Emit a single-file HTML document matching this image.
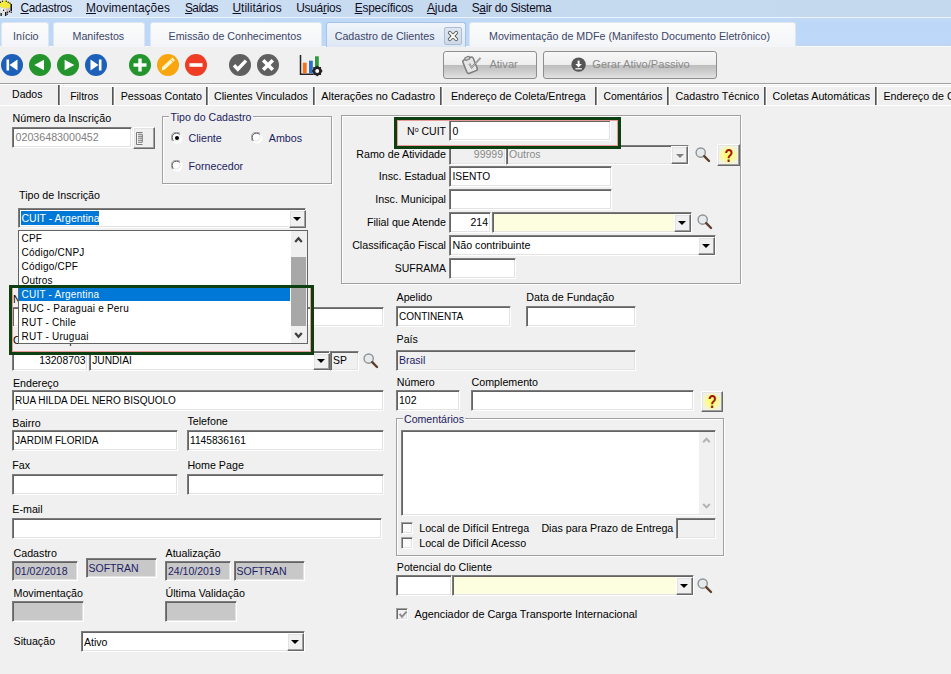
<!DOCTYPE html><html><head><meta charset="utf-8"><style>
*{margin:0;padding:0;box-sizing:border-box}
html,body{width:951px;height:674px;overflow:hidden;background:#f0f0f0;font-family:"Liberation Sans",sans-serif}
.abs{position:absolute}
.t{position:absolute;white-space:nowrap;line-height:1;font-family:"Liberation Sans",sans-serif}
.ed{position:absolute;border-style:solid;border-width:1px;border-color:#7c7c7c #fff #fff #7c7c7c;box-shadow:inset 1px 1px 0 #646464, inset -1px -1px 0 #e3e3e3}
.btn{position:absolute;border-style:solid;border-width:1px;border-color:#fff #696969 #696969 #fff;box-shadow:inset -1px -1px 0 #a0a0a0, inset 1px 1px 0 #e3e3e3;background:#f0f0f0}
.tri{position:absolute;width:0;height:0;border-left:4px solid transparent;border-right:4px solid transparent;border-top:4px solid #000}
.grp{position:absolute;border:1px solid #a0a0a0;box-shadow:1px 1px 0 #fff, inset 1px 1px 0 #fff}
.chk{position:absolute;width:12px;height:12px;border-style:solid;border-width:1px;border-color:#a0a0a0 #fff #fff #a0a0a0;box-shadow:inset 1px 1px 0 #696969, inset -1px -1px 0 #e3e3e3}
.u{text-decoration:underline}
</style></head><body>

<div class="abs" style="left:0;top:0;width:951px;height:17px;background:linear-gradient(to right,#d8e6f6 0,#cddff3 200px,#c5d9ef 420px,#c4d8ee 100%)"></div>
<div class="abs" style="left:0;top:17px;width:951px;height:1px;background:#eaf3fc"></div>
<div class="abs" style="left:0;top:18px;width:951px;height:28px;background:linear-gradient(#c2daf5 0,#bcd8f8 20%,#bdd8f8 85%,#c3d3f3 100%)"></div>
<div class="abs" style="left:0;top:46px;width:951px;height:1px;background:#f8fbfd"></div>
<svg class="abs" style="left:0;top:0" width="13" height="16" viewBox="0 0 13 16">
<path d="M0 1.5 L5 0 L11 3 L11 7 L6 9 L0 7 Z" fill="#f2ea40"/>
<path d="M0 7 L6 9 L11 7 L11 12 L6 15 L0 13 Z" fill="#cbbfc4"/>
<path d="M0 7 L6 9 L6 15 L0 13 Z" fill="#dfe4e2"/>
<circle cx="2.2" cy="9.5" r="1.2" fill="#fff"/>
<rect x="10.5" y="4" width="1.5" height="7" fill="#111"/>
<g fill="#111"><circle cx="2.5" cy="1.2" r="0.7"/><circle cx="6.2" cy="1.3" r="0.7"/><circle cx="8.2" cy="2.2" r="0.7"/><circle cx="10" cy="3.2" r="0.7"/><circle cx="0.5" cy="2.2" r="0.7"/>
<circle cx="3.5" cy="10.3" r="0.7"/><circle cx="9.5" cy="11.5" r="0.7"/><circle cx="7.5" cy="12.3" r="0.7"/><circle cx="11.3" cy="12.3" r="0.7"/><circle cx="7.2" cy="14.2" r="0.7"/>
<rect x="0.5" y="13" width="1.3" height="3"/><rect x="5" y="12" width="1.3" height="4"/></g>
</svg>
<div class="t" style="left:20.5px;top:3px;font-size:11.9px;color:#0e0e1e;letter-spacing:-0.3px"><span class="u">C</span>adastros</div>
<div class="t" style="left:86px;top:3px;font-size:11.9px;color:#0e0e1e;letter-spacing:0.05px"><span class="u">M</span>ovimentações</div>
<div class="t" style="left:185px;top:3px;font-size:11.9px;color:#0e0e1e;letter-spacing:-0.7px"><span class="u">S</span>aídas</div>
<div class="t" style="left:232.5px;top:3px;font-size:11.9px;color:#0e0e1e;letter-spacing:0.02px"><span class="u">U</span>tilitários</div>
<div class="t" style="left:296.2px;top:3px;font-size:11.9px;color:#0e0e1e;letter-spacing:-0.25px">Usuá<span class="u">r</span>ios</div>
<div class="t" style="left:354.7px;top:3px;font-size:11.9px;color:#0e0e1e;letter-spacing:-0.22px"><span class="u">E</span>specíficos</div>
<div class="t" style="left:426.9px;top:3px;font-size:11.9px;color:#0e0e1e;letter-spacing:0.03px"><span class="u">A</span>juda</div>
<div class="t" style="left:471.7px;top:3px;font-size:11.9px;color:#0e0e1e;letter-spacing:-0.28px">S<span class="u">a</span>ir do Sistema</div>
<div class="abs" style="left:1px;top:22px;width:48px;height:25px;border:1px solid #dde6f2;border-bottom:none;border-radius:3px 3px 0 0;background:linear-gradient(#fbfbfb,#f3f5f8)"></div>
<div class="t" style="left:13px;top:31px;font-size:10.7px;color:#3c4666;">Início</div>
<div class="abs" style="left:53px;top:22px;width:92px;height:25px;border:1px solid #dde6f2;border-bottom:none;border-radius:3px 3px 0 0;background:linear-gradient(#fbfbfb,#f3f5f8)"></div>
<div class="t" style="left:72.5px;top:31px;font-size:10.7px;color:#3c4666;">Manifestos</div>
<div class="abs" style="left:150px;top:22px;width:172px;height:25px;border:1px solid #dde6f2;border-bottom:none;border-radius:3px 3px 0 0;background:linear-gradient(#fbfbfb,#f3f5f8)"></div>
<div class="t" style="left:168.5px;top:31px;font-size:10.7px;color:#3c4666;">Emissão de Conhecimentos</div>
<div class="abs" style="left:326px;top:22px;width:140px;height:25px;border:1px solid #a6c2e6;border-bottom:none;border-radius:3px 3px 0 0;background:linear-gradient(#f0f4fa,#dde7f4)"></div>
<div class="t" style="left:334.7px;top:31px;font-size:10.7px;color:#3c4666;">Cadastro de Clientes</div>
<div class="abs" style="left:469px;top:22px;width:327px;height:25px;border:1px solid #dde6f2;border-bottom:none;border-radius:3px 3px 0 0;background:linear-gradient(#fbfbfb,#f3f5f8)"></div>
<div class="t" style="left:489px;top:31px;font-size:10.7px;color:#3c4666;">Movimentação de MDFe (Manifesto Documento Eletrônico)</div>
<div class="abs" style="left:444px;top:27px;width:18px;height:18px;border:1px solid #a9bdd6;border-radius:2px;background:linear-gradient(#dfe6ef,#cfd9e6)">
<svg class="abs" style="left:2px;top:2px" width="12" height="12" viewBox="0 0 12 12"><path d="M2.7 2.7 L9.3 9.3 M9.3 2.7 L2.7 9.3" stroke="#505860" stroke-width="3.6" stroke-linecap="round"/><path d="M2.7 2.7 L9.3 9.3 M9.3 2.7 L2.7 9.3" stroke="#fffef0" stroke-width="1.9" stroke-linecap="round"/></svg></div>
<svg class="abs" style="left:0px;top:53px" width="24" height="24" viewBox="0 0 24 24"><circle cx="12" cy="12" r="11" fill="#1c60b9"/><rect x="6.5" y="6.5" width="2.6" height="11" fill="#fff"/><path d="M17.5 6.5 L9.5 12 L17.5 17.5 Z" fill="#fff"/></svg>
<svg class="abs" style="left:28px;top:53px" width="24" height="24" viewBox="0 0 24 24"><circle cx="12" cy="12" r="11" fill="#24942c"/><path d="M16 6.8 L6.3 12 L16 17.2 Z" fill="#fff"/></svg>
<svg class="abs" style="left:56px;top:53px" width="24" height="24" viewBox="0 0 24 24"><circle cx="12" cy="12" r="11" fill="#24942c"/><path d="M8.6 6.8 L18.3 12 L8.6 17.2 Z" fill="#fff"/></svg>
<svg class="abs" style="left:84px;top:53px" width="24" height="24" viewBox="0 0 24 24"><circle cx="12" cy="12" r="11" fill="#1c60b9"/><rect x="14.9" y="6.5" width="2.6" height="11" fill="#fff"/><path d="M6.5 6.5 L14.5 12 L6.5 17.5 Z" fill="#fff"/></svg>
<svg class="abs" style="left:128px;top:53px" width="24" height="24" viewBox="0 0 24 24"><circle cx="12" cy="12" r="11" fill="#24942c"/><rect x="10.3" y="5.5" width="3.4" height="13" fill="#fff"/><rect x="5.5" y="10.3" width="13" height="3.4" fill="#fff"/></svg>
<svg class="abs" style="left:156px;top:53px" width="24" height="24" viewBox="0 0 24 24"><circle cx="12" cy="12" r="11" fill="#f8a510"/><path d="M5.6 17.6 L6.2 14.1 L16.5 4.6 L18.9 7.2 L8.6 16.7 Z" fill="#fff6cc"/><path d="M14.6 6.4 L17.1 9" stroke="#f8a510" stroke-width="0.9"/></svg>
<svg class="abs" style="left:184px;top:53px" width="24" height="24" viewBox="0 0 24 24"><circle cx="12" cy="12" r="11" fill="#ee3c25"/><rect x="5.5" y="10.2" width="13" height="3.6" fill="#fff"/></svg>
<svg class="abs" style="left:228px;top:53px" width="24" height="24" viewBox="0 0 24 24"><circle cx="12" cy="12" r="11" fill="#606060"/><path d="M6 12.3 L9.8 16.2 L18 7.6" stroke="#fff" stroke-width="3.4" fill="none"/></svg>
<svg class="abs" style="left:256px;top:53px" width="24" height="24" viewBox="0 0 24 24"><circle cx="12" cy="12" r="11" fill="#606060"/><path d="M7.2 7.2 L16.8 16.8 M16.8 7.2 L7.2 16.8" stroke="#fff" stroke-width="3.6"/></svg>
<svg class="abs" style="left:299px;top:54px" width="26" height="24" viewBox="0 0 26 24">
<path d="M1.5 1 L1.5 20.3 L14 20.3" stroke="#222" stroke-width="1.5" fill="none"/>
<rect x="3.8" y="8.7" width="3.9" height="10.6" fill="#ef7320"/>
<rect x="10" y="6.7" width="3.8" height="12.6" fill="#2f6fc8"/>
<rect x="16" y="2.3" width="3.8" height="12" fill="#2f9a3a"/>
<circle cx="18.2" cy="17" r="4.6" fill="#222"/>
<path d="M23.80 17.00 L21.90 18.53 L22.16 20.96 L19.73 20.70 L18.20 22.60 L16.67 20.70 L14.24 20.96 L14.50 18.53 L12.60 17.00 L14.50 15.47 L14.24 13.04 L16.67 13.30 L18.20 11.40 L19.73 13.30 L22.16 13.04 L21.90 15.47 Z" fill="#222" stroke="#f0f0f0" stroke-width="0"/>
<circle cx="18.2" cy="17" r="2" fill="#fff"/>
</svg>
<div class="abs" style="left:443px;top:51px;width:94px;height:28px;border:1px solid #8e8e8e;border-radius:3px;background:linear-gradient(#f7f7f7 0,#eeeeee 48%,#bdbdbd 50%,#cdcdcd 75%,#e2e2e2 100%)"></div>
<div class="abs" style="left:543px;top:51px;width:174px;height:28px;border:1px solid #8e8e8e;border-radius:3px;background:linear-gradient(#f7f7f7 0,#eeeeee 48%,#bdbdbd 50%,#cdcdcd 75%,#e2e2e2 100%)"></div>
<div class="t" style="left:489.4px;top:59px;font-size:11.1px;color:#8a8a8a;">Ativar</div>
<svg class="abs" style="left:461px;top:54px" width="22" height="21" viewBox="0 0 22 21">
<g transform="rotate(-22 9 11)"><rect x="3.5" y="4" width="11" height="14.5" rx="2" fill="#e6e6e6" stroke="#7c7c7c" stroke-width="1.5"/>
<rect x="6.5" y="2.3" width="5" height="3" rx="1.2" fill="#cfcfcf" stroke="#7c7c7c" stroke-width="1.1"/></g>
<path d="M8.3 9.8 L10.6 13.6 L19.5 3.8" stroke="#7c7c7c" stroke-width="1.8" fill="none"/>
<path d="M8.3 9.8 L10.6 13.6 L19.5 3.8" stroke="#ececec" stroke-width="0.6" fill="none"/>
</svg>
<svg class="abs" style="left:571px;top:57px" width="15" height="15" viewBox="0 0 15 15"><circle cx="7.6" cy="7.6" r="7.2" fill="#555"/><rect x="6.6" y="3.6" width="2" height="4" fill="#fff"/><path d="M4.4 7 L10.8 7 L7.6 10.4 Z" fill="#fff"/><rect x="4.4" y="11.2" width="6.4" height="1.2" fill="#fff"/></svg>
<div class="t" style="left:592.3px;top:59px;font-size:11.1px;color:#8a8a8a;">Gerar Ativo/Passivo</div>
<div class="abs" style="left:0;top:83px;width:951px;height:1px;background:#a0a0a0"></div>
<div class="abs" style="left:0;top:84px;width:951px;height:1px;background:#fff"></div>
<div class="abs" style="left:59px;top:86px;width:892px;height:1px;background:#fff"></div>
<div class="abs" style="left:0;top:105px;width:951px;height:1px;background:#fff"></div>
<div class="abs" style="left:58px;top:85px;width:1px;height:20px;background:#555"></div>
<div class="abs" style="left:59px;top:85px;width:1px;height:20px;background:#8c8c8c"></div>
<div class="abs" style="left:60px;top:85px;width:1px;height:20px;background:#fff"></div>
<div class="abs" style="left:112px;top:87px;width:1px;height:18px;background:#555"></div>
<div class="abs" style="left:113px;top:87px;width:1px;height:18px;background:#8c8c8c"></div>
<div class="abs" style="left:114px;top:87px;width:1px;height:18px;background:#fff"></div>
<div class="abs" style="left:206px;top:87px;width:1px;height:18px;background:#555"></div>
<div class="abs" style="left:207px;top:87px;width:1px;height:18px;background:#8c8c8c"></div>
<div class="abs" style="left:208px;top:87px;width:1px;height:18px;background:#fff"></div>
<div class="abs" style="left:313px;top:87px;width:1px;height:18px;background:#555"></div>
<div class="abs" style="left:314px;top:87px;width:1px;height:18px;background:#8c8c8c"></div>
<div class="abs" style="left:315px;top:87px;width:1px;height:18px;background:#fff"></div>
<div class="abs" style="left:440px;top:87px;width:1px;height:18px;background:#555"></div>
<div class="abs" style="left:441px;top:87px;width:1px;height:18px;background:#8c8c8c"></div>
<div class="abs" style="left:442px;top:87px;width:1px;height:18px;background:#fff"></div>
<div class="abs" style="left:595px;top:87px;width:1px;height:18px;background:#555"></div>
<div class="abs" style="left:596px;top:87px;width:1px;height:18px;background:#8c8c8c"></div>
<div class="abs" style="left:597px;top:87px;width:1px;height:18px;background:#fff"></div>
<div class="abs" style="left:667px;top:87px;width:1px;height:18px;background:#555"></div>
<div class="abs" style="left:668px;top:87px;width:1px;height:18px;background:#8c8c8c"></div>
<div class="abs" style="left:669px;top:87px;width:1px;height:18px;background:#fff"></div>
<div class="abs" style="left:764px;top:87px;width:1px;height:18px;background:#555"></div>
<div class="abs" style="left:765px;top:87px;width:1px;height:18px;background:#8c8c8c"></div>
<div class="abs" style="left:766px;top:87px;width:1px;height:18px;background:#fff"></div>
<div class="abs" style="left:875px;top:87px;width:1px;height:18px;background:#555"></div>
<div class="abs" style="left:876px;top:87px;width:1px;height:18px;background:#8c8c8c"></div>
<div class="abs" style="left:877px;top:87px;width:1px;height:18px;background:#fff"></div>
<div class="t" style="left:12.1px;top:89px;font-size:10.5px;color:#000;">Dados</div>
<div class="t" style="left:70.2px;top:92px;font-size:10.4px;color:#000;">Filtros</div>
<div class="t" style="left:120.7px;top:91px;font-size:10.68px;color:#000;">Pessoas Contato</div>
<div class="t" style="left:214px;top:91px;font-size:10.73px;color:#000;">Clientes Vinculados</div>
<div class="t" style="left:321.3px;top:91px;font-size:10.9px;color:#000;">Alterações no Cadastro</div>
<div class="t" style="left:450.9px;top:91px;font-size:10.7px;color:#000;">Endereço de Coleta/Entrega</div>
<div class="t" style="left:603.5px;top:92px;font-size:10.4px;color:#000;">Comentários</div>
<div class="t" style="left:675.6px;top:91px;font-size:10.7px;color:#000;">Cadastro Técnico</div>
<div class="t" style="left:772.6px;top:91px;font-size:10.71px;color:#000;">Coletas Automáticas</div>
<div class="t" style="left:883.4px;top:91px;font-size:10.7px;color:#000;">Endereço de Coleta</div>
<div class="t" style="left:12.5px;top:113px;font-size:10.7px;color:#000;">Número da Inscrição</div>
<div class="ed" style="left:12px;top:127px;width:120px;height:21px;background:#fff"></div>
<div class="t" style="left:15.5px;top:132px;font-size:10.7px;color:#808080;">02036483000452</div>
<div class="btn" style="left:133px;top:127px;width:22px;height:22px;background:#f0f0f0"></div>
<svg class="abs" style="left:135px;top:132px" width="10" height="14" viewBox="0 0 10 14"><path d="M7.5 0.5 H1.5 V12.5 H7.5" stroke="#7a7a7a" stroke-width="1" fill="none"/><path d="M3 2.3 H7.3 V10.5 M3 4.3 H7 M3 6.2 H7 M3 8.3 H7 M3 10.3 H7" stroke="#7a7a7a" stroke-width="1" fill="none"/></svg>
<div class="grp" style="left:162px;top:116px;width:170px;height:68px"></div>
<div class="abs" style="left:169px;top:110px;width:84px;height:12px;background:#f0f0f0"></div>
<div class="t" style="left:170.6px;top:112px;font-size:10.6px;color:#1c1c5e;">Tipo do Cadastro</div>
<svg class="abs" style="left:171px;top:132px" width="12" height="12" viewBox="0 0 12 12">
<circle cx="6" cy="6" r="5.5" fill="#fff"/>
<path d="M1.6 9.2 A5.2 5.2 0 0 1 9.2 1.6" stroke="#a0a0a0" stroke-width="1" fill="none"/>
<path d="M2.4 8.6 A4.2 4.2 0 0 1 8.6 2.4" stroke="#505050" stroke-width="1" fill="none"/>
<path d="M9.6 2.6 A5.2 5.2 0 0 1 2.6 9.6" stroke="#fff" stroke-width="1" fill="none"/>
<path d="M8.8 3.2 A4.2 4.2 0 0 1 3.2 8.8" stroke="#e3e3e3" stroke-width="1" fill="none"/>
<circle cx="6" cy="6" r="2" fill="#000"/></svg>
<div class="t" style="left:188.5px;top:133px;font-size:10.7px;color:#1c1c5e;">Cliente</div>
<svg class="abs" style="left:251px;top:132px" width="12" height="12" viewBox="0 0 12 12">
<circle cx="6" cy="6" r="5.5" fill="#fff"/>
<path d="M1.6 9.2 A5.2 5.2 0 0 1 9.2 1.6" stroke="#a0a0a0" stroke-width="1" fill="none"/>
<path d="M2.4 8.6 A4.2 4.2 0 0 1 8.6 2.4" stroke="#505050" stroke-width="1" fill="none"/>
<path d="M9.6 2.6 A5.2 5.2 0 0 1 2.6 9.6" stroke="#fff" stroke-width="1" fill="none"/>
<path d="M8.8 3.2 A4.2 4.2 0 0 1 3.2 8.8" stroke="#e3e3e3" stroke-width="1" fill="none"/>
</svg>
<div class="t" style="left:268.8px;top:133px;font-size:10.7px;color:#1c1c5e;">Ambos</div>
<svg class="abs" style="left:171px;top:160px" width="12" height="12" viewBox="0 0 12 12">
<circle cx="6" cy="6" r="5.5" fill="#fff"/>
<path d="M1.6 9.2 A5.2 5.2 0 0 1 9.2 1.6" stroke="#a0a0a0" stroke-width="1" fill="none"/>
<path d="M2.4 8.6 A4.2 4.2 0 0 1 8.6 2.4" stroke="#505050" stroke-width="1" fill="none"/>
<path d="M9.6 2.6 A5.2 5.2 0 0 1 2.6 9.6" stroke="#fff" stroke-width="1" fill="none"/>
<path d="M8.8 3.2 A4.2 4.2 0 0 1 3.2 8.8" stroke="#e3e3e3" stroke-width="1" fill="none"/>
</svg>
<div class="t" style="left:188.5px;top:161px;font-size:10.7px;color:#1c1c5e;">Fornecedor</div>
<div class="t" style="left:19px;top:190px;font-size:10.7px;color:#000;">Tipo de Inscrição</div>
<div class="t" style="left:13px;top:294px;font-size:10.7px;color:#000;">Nome / Razão Social</div>
<div class="ed" style="left:12px;top:307px;width:372px;height:20px;background:#fff"></div>
<div class="t" style="left:13px;top:335px;font-size:10.7px;color:#000;letter-spacing:-0.5px">CEP / Município / UF</div>
<div class="ed" style="left:12px;top:351px;width:76px;height:20px;background:#fff"></div>
<div class="t" style="right:865.5px;top:356px;font-size:10.4px;color:#000;">13208703</div>
<div class="ed" style="left:89px;top:351px;width:241px;height:20px;background:#fff"></div>
<div class="t" style="left:92.2px;top:356px;font-size:10.2px;color:#000;">JUNDIAI</div>
<div class="btn" style="left:313px;top:353px;width:17px;height:17px"><div class="tri" style="left:3px;top:5px"></div></div>
<div class="ed" style="left:330px;top:351px;width:29px;height:20px;background:#f0f0f0"></div>
<div class="t" style="left:333px;top:356px;font-size:10.4px;color:#000;">SP</div>
<svg class="abs" style="left:362px;top:353px" width="17" height="16" viewBox="0 0 17 16">
<circle cx="6.7" cy="5.6" r="4.6" fill="#e6eaed" stroke="#8e9494" stroke-width="1.4"/>
<line x1="10.2" y1="9.2" x2="15" y2="14" stroke="#5e3e2a" stroke-width="2.4" stroke-linecap="round"/>
</svg>
<div class="t" style="left:12.9px;top:378px;font-size:10.7px;color:#000;">Endereço</div>
<div class="ed" style="left:12px;top:390px;width:372px;height:21px;background:#fff"></div>
<div class="t" style="left:15px;top:396px;font-size:10.0px;color:#000;">RUA HILDA DEL NERO BISQUOLO</div>
<div class="t" style="left:12.3px;top:418px;font-size:10.7px;color:#000;">Bairro</div>
<div class="ed" style="left:12px;top:430px;width:166px;height:21px;background:#fff"></div>
<div class="t" style="left:15px;top:436px;font-size:10.0px;color:#000;">JARDIM FLORIDA</div>
<div class="t" style="left:187.4px;top:416px;font-size:10.7px;color:#000;">Telefone</div>
<div class="ed" style="left:187px;top:430px;width:197px;height:21px;background:#fff"></div>
<div class="t" style="left:190px;top:436px;font-size:10.2px;color:#000;">1145836161</div>
<div class="t" style="left:12.3px;top:460px;font-size:10.7px;color:#000;">Fax</div>
<div class="ed" style="left:12px;top:474px;width:166px;height:21px;background:#fff"></div>
<div class="t" style="left:187.4px;top:460px;font-size:10.7px;color:#000;">Home Page</div>
<div class="ed" style="left:187px;top:474px;width:197px;height:21px;background:#fff"></div>
<div class="t" style="left:12.3px;top:504px;font-size:10.7px;color:#000;">E-mail</div>
<div class="ed" style="left:12px;top:518px;width:370px;height:21px;background:#fff"></div>
<div class="t" style="left:13.5px;top:548px;font-size:10.7px;color:#000;">Cadastro</div>
<div class="ed" style="left:12px;top:561px;width:66px;height:20px;background:#c8c8c8"></div>
<div class="t" style="left:15px;top:566px;font-size:10.5px;color:#1e1e66;">01/02/2018</div>
<div class="ed" style="left:86px;top:558px;width:71px;height:20px;background:#c8c8c8"></div>
<div class="t" style="left:88.5px;top:563px;font-size:10.5px;color:#1e1e66;">SOFTRAN</div>
<div class="t" style="left:165.5px;top:548px;font-size:10.7px;color:#000;">Atualização</div>
<div class="ed" style="left:165px;top:561px;width:66px;height:20px;background:#c8c8c8"></div>
<div class="t" style="left:168px;top:566px;font-size:10.5px;color:#1e1e66;">24/10/2019</div>
<div class="ed" style="left:234px;top:561px;width:71px;height:20px;background:#c8c8c8"></div>
<div class="t" style="left:236.5px;top:566px;font-size:10.5px;color:#1e1e66;">SOFTRAN</div>
<div class="t" style="left:13.5px;top:588px;font-size:10.7px;color:#000;">Movimentação</div>
<div class="ed" style="left:12px;top:601px;width:72px;height:21px;background:#c8c8c8"></div>
<div class="t" style="left:165.5px;top:588px;font-size:10.7px;color:#000;">Última Validação</div>
<div class="ed" style="left:165px;top:601px;width:72px;height:21px;background:#c8c8c8"></div>
<div class="t" style="left:13.5px;top:636px;font-size:10.7px;color:#000;">Situação</div>
<div class="ed" style="left:81px;top:631px;width:224px;height:21px;background:#fff"></div>
<div class="t" style="left:84px;top:637px;font-size:10.5px;color:#000;">Ativo</div>
<div class="btn" style="left:287px;top:633px;width:17px;height:18px"><div class="tri" style="left:3px;top:6px"></div></div>
<div class="grp" style="left:341px;top:115px;width:400px;height:169px"></div>
<div class="t" style="right:505px;top:126px;font-size:10.5px;color:#000;">N<span style="font-size:7px;vertical-align:3px">o</span> CUIT</div>
<div class="ed" style="left:449px;top:120px;width:162px;height:21px;background:#fff"></div>
<div class="t" style="left:452.5px;top:126px;font-size:10.5px;color:#000;">0</div>
<div class="t" style="right:505px;top:149px;font-size:10.7px;color:#000;">Ramo de Atividade</div>
<div class="ed" style="left:449px;top:145px;width:57px;height:20px;background:#f0f0f0"></div>
<div class="t" style="right:448px;top:149px;font-size:10.5px;color:#8a8a8a;">99999</div>
<div class="ed" style="left:506px;top:145px;width:183px;height:20px;background:#f0f0f0"></div>
<div class="t" style="left:509px;top:149px;font-size:10.5px;color:#8a8a8a;">Outros</div>
<div class="btn" style="left:671px;top:146px;width:17px;height:18px"><div class="tri" style="left:4px;top:7px;border-top-color:#808080"></div></div>
<svg class="abs" style="left:694px;top:147px" width="17" height="16" viewBox="0 0 17 16">
<circle cx="6.7" cy="5.6" r="4.6" fill="#e6eaed" stroke="#8e9494" stroke-width="1.4"/>
<line x1="10.2" y1="9.2" x2="15" y2="14" stroke="#5e3e2a" stroke-width="2.4" stroke-linecap="round"/>
</svg>
<div class="btn" style="left:717px;top:144px;width:23px;height:22px;background:radial-gradient(ellipse at 50% 50%, #ffff70 0, #fbfb90 35%, #f0f0f0 75%)"><div class="t" style="left:0;width:22px;text-align:center;top:2px;font:bold 17.5px 'Liberation Sans',sans-serif;color:#a01800;line-height:18px;transform:scaleX(0.82)">?</div></div>
<div class="t" style="right:505px;top:171px;font-size:10.7px;color:#000;">Insc. Estadual</div>
<div class="ed" style="left:449px;top:166px;width:163px;height:21px;background:#fff"></div>
<div class="t" style="left:452.5px;top:172px;font-size:10.2px;color:#000;">ISENTO</div>
<div class="t" style="right:505px;top:194px;font-size:10.7px;color:#000;">Insc. Municipal</div>
<div class="ed" style="left:449px;top:189px;width:163px;height:21px;background:#fff"></div>
<div class="t" style="right:505px;top:217px;font-size:10.7px;color:#000;">Filial que Atende</div>
<div class="ed" style="left:449px;top:212px;width:42px;height:21px;background:#fff"></div>
<div class="t" style="right:463px;top:217px;font-size:10.5px;color:#000;">214</div>
<div class="ed" style="left:492px;top:212px;width:200px;height:21px;background:#fdfde0"></div>
<div class="btn" style="left:674px;top:214px;width:17px;height:18px"><div class="tri" style="left:3px;top:6px"></div></div>
<svg class="abs" style="left:696px;top:214px" width="17" height="16" viewBox="0 0 17 16">
<circle cx="6.7" cy="5.6" r="4.6" fill="#e6eaed" stroke="#8e9494" stroke-width="1.4"/>
<line x1="10.2" y1="9.2" x2="15" y2="14" stroke="#5e3e2a" stroke-width="2.4" stroke-linecap="round"/>
</svg>
<div class="t" style="right:505px;top:240px;font-size:10.7px;color:#000;">Classificação Fiscal</div>
<div class="ed" style="left:449px;top:235px;width:267px;height:21px;background:#fff"></div>
<div class="t" style="left:452.5px;top:240px;font-size:10.7px;color:#000;">Não contribuinte</div>
<div class="btn" style="left:698px;top:237px;width:17px;height:18px"><div class="tri" style="left:3px;top:6px"></div></div>
<div class="t" style="right:505px;top:263px;font-size:10.5px;color:#000;">SUFRAMA</div>
<div class="ed" style="left:449px;top:258px;width:67px;height:21px;background:#fff"></div>
<div class="t" style="left:396.5px;top:292px;font-size:10.7px;color:#000;">Apelido</div>
<div class="ed" style="left:396px;top:306px;width:115px;height:21px;background:#fff"></div>
<div class="t" style="left:399px;top:312px;font-size:10.0px;color:#000;">CONTINENTA</div>
<div class="t" style="left:526.3px;top:292px;font-size:10.7px;color:#000;">Data de Fundação</div>
<div class="ed" style="left:526px;top:306px;width:110px;height:21px;background:#fff"></div>
<div class="t" style="left:396.5px;top:334px;font-size:10.7px;color:#000;">País</div>
<div class="ed" style="left:396px;top:350px;width:240px;height:21px;background:#f0f0f0"></div>
<div class="t" style="left:399px;top:355px;font-size:10.5px;color:#1e1e66;">Brasil</div>
<div class="t" style="left:396.8px;top:377px;font-size:10.7px;color:#000;">Número</div>
<div class="ed" style="left:396px;top:390px;width:64px;height:21px;background:#fff"></div>
<div class="t" style="left:399px;top:395px;font-size:10.5px;color:#000;">102</div>
<div class="t" style="left:471.5px;top:377px;font-size:10.7px;color:#000;">Complemento</div>
<div class="ed" style="left:471px;top:390px;width:223px;height:21px;background:#fff"></div>
<div class="btn" style="left:701px;top:391px;width:22px;height:21px;background:radial-gradient(ellipse at 50% 50%, #ffff70 0, #fbfb90 35%, #f0f0f0 75%)"><div class="t" style="left:0;width:21px;text-align:center;top:1px;font:bold 17.5px 'Liberation Sans',sans-serif;color:#a01800;line-height:18px;transform:scaleX(0.82)">?</div></div>
<div class="grp" style="left:396px;top:418px;width:328px;height:138px"></div>
<div class="abs" style="left:403px;top:412px;width:62px;height:12px;background:#f0f0f0"></div>
<div class="t" style="left:404px;top:414px;font-size:10.6px;color:#1c1c5e;">Comentários</div>
<div class="ed" style="left:401px;top:430px;width:315px;height:86px;background:#fff"></div>
<div class="abs" style="left:699px;top:432px;width:15px;height:82px;background:#f0f0f0"></div>
<svg class="abs" style="left:701px;top:436px" width="11" height="8" viewBox="0 0 11 8"><path d="M2.2 6.2 L5.5 2.8 L8.8 6.2" stroke="#b4b4b4" stroke-width="2" fill="none"/></svg>
<svg class="abs" style="left:701px;top:502px" width="11" height="8" viewBox="0 0 11 8"><path d="M2.2 2 L5.5 5.4 L8.8 2" stroke="#b4b4b4" stroke-width="2" fill="none"/></svg>
<div class="chk" style="left:401px;top:522px;background:#fafafa"></div>
<div class="t" style="left:419.2px;top:523px;font-size:10.7px;color:#000;">Local de Difícil Entrega</div>
<div class="chk" style="left:401px;top:537px;background:#fafafa"></div>
<div class="t" style="left:419.2px;top:538px;font-size:10.7px;color:#000;">Local de Difícil Acesso</div>
<div class="t" style="left:541.4px;top:523px;font-size:10.7px;color:#000;">Dias para Prazo de Entrega</div>
<div class="ed" style="left:676px;top:518px;width:40px;height:21px;background:#f0f0f0"></div>
<div class="t" style="left:396.8px;top:562px;font-size:10.7px;color:#000;">Potencial do Cliente</div>
<div class="ed" style="left:396px;top:575px;width:56px;height:21px;background:#fff"></div>
<div class="ed" style="left:452px;top:575px;width:242px;height:21px;background:#fdfde0"></div>
<div class="btn" style="left:676px;top:577px;width:17px;height:18px"><div class="tri" style="left:3px;top:6px"></div></div>
<svg class="abs" style="left:696px;top:578px" width="17" height="16" viewBox="0 0 17 16">
<circle cx="6.7" cy="5.6" r="4.6" fill="#e6eaed" stroke="#8e9494" stroke-width="1.4"/>
<line x1="10.2" y1="9.2" x2="15" y2="14" stroke="#5e3e2a" stroke-width="2.4" stroke-linecap="round"/>
</svg>
<div class="chk" style="left:396px;top:608px;background:#f2f2f2"><svg class="abs" style="left:1px;top:1px" width="10" height="10" viewBox="0 0 10 10"><path d="M1.6 3.8 L4 6.8 L8.6 1.6" stroke="#8c8c8c" stroke-width="2" fill="none"/></svg></div>
<div class="t" style="left:414.4px;top:609px;font-size:10.86px;color:#000;">Agenciador de Carga Transporte Internacional</div>
<div class="ed" style="left:18px;top:208px;width:288px;height:20px;background:#fff"></div>
<div class="abs" style="left:21px;top:211px;width:78px;height:14px;background:#0078d7"></div>
<div class="t" style="left:21.5px;top:213px;font-size:10.5px;color:#fff;">CUIT - Argentina</div>
<div class="btn" style="left:289px;top:210px;width:17px;height:18px"><div class="tri" style="left:3px;top:6px"></div></div>
<div class="abs" style="left:18px;top:230px;width:290px;height:114px;background:#fff;border:1px solid #646464"></div>
<div class="abs" style="left:19px;top:287px;width:271px;height:14px;background:#0078d7"></div>
<div class="t" style="left:21.5px;top:234px;font-size:10.0px;color:#000;letter-spacing:0.22px">CPF</div>
<div class="t" style="left:21.5px;top:248px;font-size:10.0px;color:#000;letter-spacing:0.22px">Código/CNPJ</div>
<div class="t" style="left:21.5px;top:262px;font-size:10.0px;color:#000;letter-spacing:0.22px">Código/CPF</div>
<div class="t" style="left:21.5px;top:276px;font-size:10.0px;color:#000;letter-spacing:0.22px">Outros</div>
<div class="t" style="left:21.5px;top:290px;font-size:10.0px;color:#fff;letter-spacing:0.22px">CUIT - Argentina</div>
<div class="t" style="left:21.5px;top:304px;font-size:10.0px;color:#000;letter-spacing:0.22px">RUC - Paraguai e Peru</div>
<div class="t" style="left:21.5px;top:318px;font-size:10.0px;color:#000;letter-spacing:0.22px">RUT - Chile</div>
<div class="t" style="left:21.5px;top:332px;font-size:10.0px;color:#000;letter-spacing:0.22px">RUT - Uruguai</div>
<div class="abs" style="left:291px;top:231px;width:16px;height:112px;background:#f0f0f0"></div>
<div class="abs" style="left:291px;top:257px;width:15px;height:69px;background:#a8a8a8"></div>
<svg class="abs" style="left:293px;top:236px" width="11" height="8" viewBox="0 0 11 8"><path d="M2.2 6 L5.5 2.2 L8.8 6" stroke="#404040" stroke-width="2.2" fill="none"/></svg>
<svg class="abs" style="left:293px;top:331px" width="11" height="8" viewBox="0 0 11 8"><path d="M2.2 2 L5.5 5.8 L8.8 2" stroke="#404040" stroke-width="2.2" fill="none"/></svg>
<div class="abs" style="left:9px;top:285px;width:305px;height:70px;border:3px solid #0e3f10"></div>
<div class="abs" style="left:12px;top:288px;width:299px;height:64px;border:1px solid #e89a9a;border-top:none"></div>
<div class="abs" style="left:394px;top:117px;width:227px;height:32px;border:3px solid #0e3f10"></div>
<div class="abs" style="left:397px;top:120px;width:221px;height:26px;border:1px solid #e89a9a"></div>
</body></html>
